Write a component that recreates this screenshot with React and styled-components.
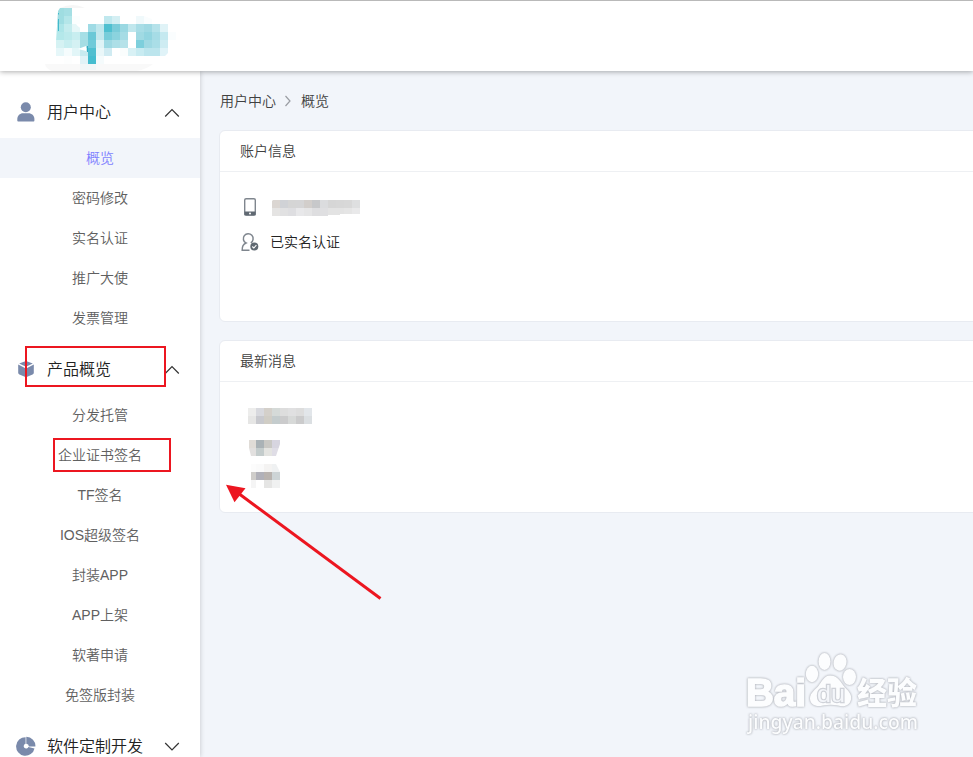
import { createGlobalStyle, styled } from "styled-components";

const GlobalStyle = createGlobalStyle`
  * {
    box-sizing: border-box;
  }
  body {
    margin: 0;
    overflow: hidden;
    background: #f2f5fa;
    font-family: "Liberation Sans", "Noto Sans CJK SC", sans-serif;
    font-weight: 350;
  }
`;

const Page = styled.div`
  position: relative;
  display: flex;
  flex-direction: column;
  height: 757px;
  overflow: hidden;
`;

const Header = styled.header`
  position: relative;
  z-index: 2;
  flex: none;
  height: 71px;
  padding-left: 40px;
  border-top: 1px solid #b9b9b9;
  background: #fff;
  box-shadow: 0 1px 5px rgba(0, 0, 0, 0.32);
`;

const Body = styled.div`
  display: flex;
  flex: 1;
  min-height: 0;
`;

const Sidebar = styled.nav`
  flex: none;
  width: 200px;
  padding-top: 10px;
  background: #fff;
  box-shadow: 0 0 5px rgba(0, 0, 0, 0.2);
`;

const Group = styled.section`
  padding-top: 5px;
`;

const GroupTitle = styled.div`
  display: flex;
  align-items: center;
  height: 52px;
  padding: 0 20px 0 16px;
  color: #222;
  font-size: 16px;
  line-height: 24px;

  svg {
    flex: none;
  }
  svg:last-child {
    margin-top: 2px;
  }
  span {
    flex: 1;
    margin-left: 11px;
    padding-top: 2px;
  }
`;

const MenuItem = styled.a`
  display: block;
  height: 40px;
  color: ${(props) => (props.$active ? "#7f7fff" : "#606060")};
  background: ${(props) => (props.$active ? "#f2f5fa" : "transparent")};
  font-size: 14px;
  line-height: 40px;
  text-align: center;
`;

const Main = styled.main`
  flex: 1;
  min-width: 0;
  padding: 19px 0 0 19px;
`;

const Breadcrumb = styled.div`
  display: flex;
  align-items: center;
  height: 20px;
  margin: 0 0 20px 1px;
  color: #404040;
  font-size: 14px;

  svg {
    margin: 1px 9px 0 8px;
  }
`;

const Card = styled.section`
  height: ${(props) => props.$height}px;
  margin: 0 -10px 18px 0;
  border: 1px solid #e8ebf1;
  border-radius: 6px;
  background: #fff;
`;

const CardTitle = styled.h2`
  height: 41px;
  margin: 0;
  padding-left: 20px;
  border-bottom: 1px solid #eef0f3;
  color: #404040;
  font-size: 14px;
  font-weight: 350;
  line-height: 40px;
`;

const InfoList = styled.div`
  padding: 17px 0 0 20px;
`;

const InfoRow = styled.div`
  display: flex;
  align-items: center;
  gap: 10px;
  height: 35px;
  color: #222;
  font-size: 14px;
  line-height: 20px;
`;

const MaskedPhone = styled.svg`
  margin-top: 2px;
`;

const NewsList = styled.div`
  display: flex;
  flex-direction: column;
  align-items: flex-start;
  gap: 16px;
  padding: 26px 0 0 28px;

  svg {
    display: block;
  }
  svg:last-child {
    margin-top: -8px;
  }
`;

const Highlight = styled.div`
  position: absolute;
  z-index: 3;
  left: ${(props) => props.$x}px;
  top: ${(props) => props.$y}px;
  width: ${(props) => props.$w}px;
  height: ${(props) => props.$h}px;
  border: 2px solid #ec1620;
`;

const Arrow = styled.svg`
  position: absolute;
  z-index: 3;
  left: 220px;
  top: 480px;
`;

const Watermark = styled.svg`
  position: absolute;
  z-index: 3;
  left: 740px;
  top: 645px;
  filter: drop-shadow(0 0 1px #b4b7be) drop-shadow(0 0 0.5px #c8cbd1);
`;

const CELL = 8;

const logoCells = [
  ["#9fdde1", "#a5dfe4"],
  ["#9fdde2", "#b4e6e9", "#fbfefe", "", "", "", "#c0e8ee", "#d4eff3", "", "", "#f0f9fb", "#fafdfe"],
  ["#ade5e8", "#c4ecee", "#e6f7f8", "", "#9fdbe5", "#bfe7ed", "#50c0d0", "#7accd9", "#9ad8e2", "#c0e7ed", "#a8dde6", "#a0d9e3", "#b5e2ea", "#e0f3f7"],
  ["#b4e8ea", "#bceaec", "#c8eef0", "#a6dfe6", "#6ac8d7", "#c3e8ee", "#78cdda", "#8bd3de", "#a6dce5", "", "#a0dae3", "#93d5e0", "#a6dce6", "#c5e9f0", "#fafdfe"],
  ["#d5f2f3", "#c8eef0", "#d4f1f3", "#a5dde4", "#70cad9", "#dff3f6", "#9ed9e3", "#addfe7", "#b5e2e9", "", "#7dcfdc", "#9fd9e3", "#aadee7", "#ceecf2"],
  ["#e6f7f9", "#f5fcfd", "#e2f6f8", "#c8ebf0", "#50bfd0", "#eaf7f9", "#d0ebf2", "", "#fafdfd", "#d8f1f5", "#c8ebf1", "#bce5ed", "#bce5ed", "#e0f3f8"],
  ["", "#fdfefe", "", "#e0f3f7", "#45bdcf", "#f5fbfc"],
];

const phoneCells = [
  ["#dbd6d2", "#d0d2d6", "#d5d5d5", "#d5d5d6", "#d2cecb", "#c7c8ca", "#dbdcde", "#d6d6d6", "#d7d7d7", "#d8d8d8", "#dedfe0"],
  ["#e5e4e3", "#e1e1e2", "#dedee1", "#e8e8ea", "#e5e5e6", "#dedee0", "#dfdfe1", "#e3e3e3", "#e3e3e3", "#e5e5e5", "#e9e9ea"],
];

const newsCells = [
  [
    ["#ededec", "#d8d9de", "#d4d0ca", "#d5dad8", "#dddddd", "#e0e0e1", "#dddddd", "#e2e6ea"],
    ["#e6e6e5", "#c8c9ce", "#d0cdc5", "#c4cccd", "#cbcbcc", "#d7d9d8", "#cbcbcc", "#dbdfe2"],
  ],
  [
    ["#e0dcd7", "#aab2b6", "#c9c8c4", "#d7d5e0"],
    ["#e2e0df", "#c4cccc", "#e4e4e1", "#dfdde6"],
  ],
  [
    ["#fcfcfc", "#fafafa", "#f4f3f2", "#eff1f2"],
    ["#cfcdca", "#b1b1b9", "#b9b3af", "#cdd4d6"],
    ["#f5f5f5", "", "#e5e5e4", "#f0f1f1"],
  ],
];

const Cells = ({ rows, x = 0, y = 0 }) =>
  rows.map((row, r) =>
    row.map(
      (fill, c) =>
        fill && (
          <rect key={`${r}-${c}`} x={x + c * CELL} y={y + r * CELL} width={CELL} height={CELL} fill={fill} shapeRendering="crispEdges" />
        )
    )
  );

const Logo = () => (
  <svg width="140" height="70" viewBox="40 1 140 70">
    <path d="M60 8Q73 2 85 8z" fill="#f6f6f6" />
    <path d="M45 64H153Q145 70 136 71H52Q46 69 45 64z" fill="#f9f9f9" />
    <rect x="80" y="64" width="16" height="6" fill="#f0f7f8" />
    <clipPath id="logo">
      <path d="M60 8H72V16H80V24H104V16H144L160 22V24H168V32H176V40H168V53L165 56H104V64H56V41L58 11Z" />
    </clipPath>
    <g clipPath="url(#logo)">
      <Cells rows={logoCells} x={56} y={8} />
    </g>
    <path d="M76 24Q80 30 88 28V24z" fill="#fff" />
    <path d="M58.500 13v1.500M58.500 19V31" stroke="#42b9cc" />
    <path d="M78 49l8-3v5z" fill="#fff" />
    <path d="M87.500 46v6" stroke="#35acc2" />
  </svg>
);

const UserIcon = () => (
  <svg width="20" height="22" viewBox="0 0 20 22" fill="#7a8aab">
    <circle cx="9.800" cy="6.300" r="5" />
    <path d="M1.300 19.500v-1.600C1.300 14.500 4 12.200 7 12.200h5.500c3.200 0 5.900 2.400 5.900 5.700v1.600c0 .7-.4 1.100-1.100 1.100H2.500c-.8 0-1.200-.4-1.200-1.100z" />
  </svg>
);

const BoxIcon = () => (
  <svg width="20" height="20" viewBox="0 0 20 20" fill="#7a8aab">
    <path d="M10 2l6.800 2.500L10 7.800 3.200 4.500z" />
    <path d="M2.200 5.500l7.200 3.700v8.900l-6-2.600c-.8-.4-1.200-.9-1.200-1.700z" />
    <path d="M17.800 5.500l-7.200 3.700v8.900l6-2.600c.8-.4 1.200-.9 1.200-1.700z" />
  </svg>
);

const PieIcon = () => (
  <svg width="20" height="20" viewBox="0 0 20 20" fill="#7a8aab">
    <path d="M9.600 1.200v6.600a2.400 2.400 0 1 0 2.800 3.100l6.100 1.500A9.300 9.300 0 1 1 9.600 1.200z" />
    <path d="M10.300.700a9.200 9.200 0 0 1 9.100 9.800h-6.600a2.600 2.600 0 0 0-2.500-2.700z" />
  </svg>
);

const Chevron = ({ open }) => (
  <svg width="16" height="10" viewBox="0 0 16 10" fill="none" stroke="#333" strokeWidth="1.200">
    <path d={open ? "M1.200 8.500l6.800-7 6.800 7" : "M1.200 1l6.800 7 6.800-7"} />
  </svg>
);

const PhoneIcon = () => (
  <svg width="20" height="20" viewBox="0 0 20 20">
    <rect x="4.700" y="1.700" width="10.600" height="16.600" rx="1.400" fill="none" stroke="#7f868e" strokeWidth="1.400" />
    <path d="M4.500 14.500h11V18H4.500z" fill="#606972" />
    <circle cx="10" cy="16.400" r="1" fill="#fff" />
  </svg>
);

const VerifiedIcon = () => (
  <svg width="20" height="20" viewBox="0 0 20 20" fill="none" stroke="#7f868e" strokeWidth="1.500">
    <path d="M9.500 18.300H2.200C2 14.300 3.500 12 6 11A4.900 4.900 0 1 1 10.800 10.800" />
    <circle cx="14.300" cy="14.500" r="4" fill="#606972" stroke="none" />
    <path d="M12.300 14.500l1.500 1.500 2.600-2.800" stroke="#fff" strokeWidth="1.100" />
  </svg>
);

const menu = [
  {
    title: "用户中心",
    Icon: UserIcon,
    open: true,
    items: ["概览", "密码修改", "实名认证", "推广大使", "发票管理"],
  },
  {
    title: "产品概览",
    Icon: BoxIcon,
    open: true,
    items: ["分发托管", "企业证书签名", "TF签名", "IOS超级签名", "封装APP", "APP上架", "软著申请", "免签版封装"],
  },
  { title: "软件定制开发", Icon: PieIcon, open: false, items: [] },
];

export default function App() {
  return (
    <>
      <GlobalStyle />
      <Page>
        <Header>
          <Logo />
        </Header>
        <Body>
          <Sidebar>
            {menu.map(({ title, Icon, open, items }) => (
              <Group key={title}>
                <GroupTitle>
                  <Icon />
                  <span>{title}</span>
                  <Chevron open={open} />
                </GroupTitle>
                {items.map((item) => (
                  <MenuItem key={item} $active={item === "概览"}>
                    {item}
                  </MenuItem>
                ))}
              </Group>
            ))}
          </Sidebar>
          <Main>
            <Breadcrumb>
              用户中心
              <svg width="8" height="12" viewBox="0 0 8 12" fill="none" stroke="#9a9da3" strokeWidth="1.200">
                <path d="M1.500 1L6 6l-4.500 5" />
              </svg>
              概览
            </Breadcrumb>
            {/* Account info */}
            <Card $height={192}>
              <CardTitle>账户信息</CardTitle>
              <InfoList>
                <InfoRow>
                  <PhoneIcon />
                  <MaskedPhone width="90" height="16" viewBox="-2 0 90 16">
                    <clipPath id="phone">
                      <path d="M1 0H88V14H68V15H56V16H0V1z" />
                    </clipPath>
                    <g clipPath="url(#phone)">
                      <Cells rows={phoneCells} />
                    </g>
                  </MaskedPhone>
                </InfoRow>
                <InfoRow>
                  <VerifiedIcon />
                  已实名认证
                </InfoRow>
              </InfoList>
            </Card>
            {/* Latest news */}
            <Card $height={173}>
              <CardTitle>最新消息</CardTitle>
              <NewsList>
                <svg width="64" height="16">
                  <Cells rows={newsCells[0]} />
                </svg>
                <svg width="32" height="16">
                  <clipPath id="news1">
                    <path d="M1 0H32V4L28 16H3L1 8z" />
                  </clipPath>
                  <g clipPath="url(#news1)">
                    <Cells rows={newsCells[1]} />
                  </g>
                </svg>
                <svg width="32" height="24">
                  <clipPath id="news2">
                    <path d="M3 0H28L32 8V24H3z" />
                  </clipPath>
                  <g clipPath="url(#news2)">
                    <Cells rows={newsCells[2]} />
                  </g>
                </svg>
              </NewsList>
            </Card>
          </Main>
        </Body>

        <Highlight $x={25} $y={346} $w={141} $h={41} />
        <Highlight $x={53} $y={438} $w={118} $h={34} />
        <Arrow width="170" height="125" viewBox="220 480 170 125">
          <path d="M236 491.500L380.500 598.500" stroke="#ec1620" strokeWidth="3" />
          <path d="M226 484.700l19.500 3.500-11 14z" fill="#ec1620" />
        </Arrow>
        <Watermark width="200" height="100" viewBox="740 645 200 100">
          <g fill="#fcfdfe" fontFamily="Liberation Sans, Noto Sans CJK SC, sans-serif">
            <text x="746" y="706" fontSize="38" fontWeight="700" stroke="#fcfdfe" strokeWidth="1.600" textLength="60" lengthAdjust="spacingAndGlyphs">
              Bai
            </text>
            <ellipse cx="812" cy="674" rx="6.200" ry="8.300" />
            <ellipse cx="824.500" cy="661.500" rx="6" ry="8.500" />
            <ellipse cx="840" cy="662.500" rx="6.500" ry="8.300" transform="rotate(12 840 662.500)" />
            <ellipse cx="849.500" cy="677" rx="6.500" ry="8" />
            <path d="M830 675.500c8 0 10 6 15 12 4 4 7 7 6 12-1 6-7 8-13 6-5-1-10-1-15 0-7 2-13-1-13-7 0-5 4-8 8-12 4-5 6-11 12-11z" />
            <text x="817" y="702" fontSize="24" fill="#f4f6fa" stroke="#cfd2d8" strokeWidth="2.400" paintOrder="stroke" textLength="28" lengthAdjust="spacingAndGlyphs">
              du
            </text>
            <text x="857" y="704" fontSize="31" fontWeight="900" textLength="60" lengthAdjust="spacingAndGlyphs">
              经验
            </text>
            <text x="748" y="729" fontSize="19.500" fontFamily="Noto Sans, sans-serif" fontWeight="500" textLength="170" lengthAdjust="spacingAndGlyphs">
              jingyan.baidu.com
            </text>
          </g>
        </Watermark>
      </Page>
    </>
  );
}
